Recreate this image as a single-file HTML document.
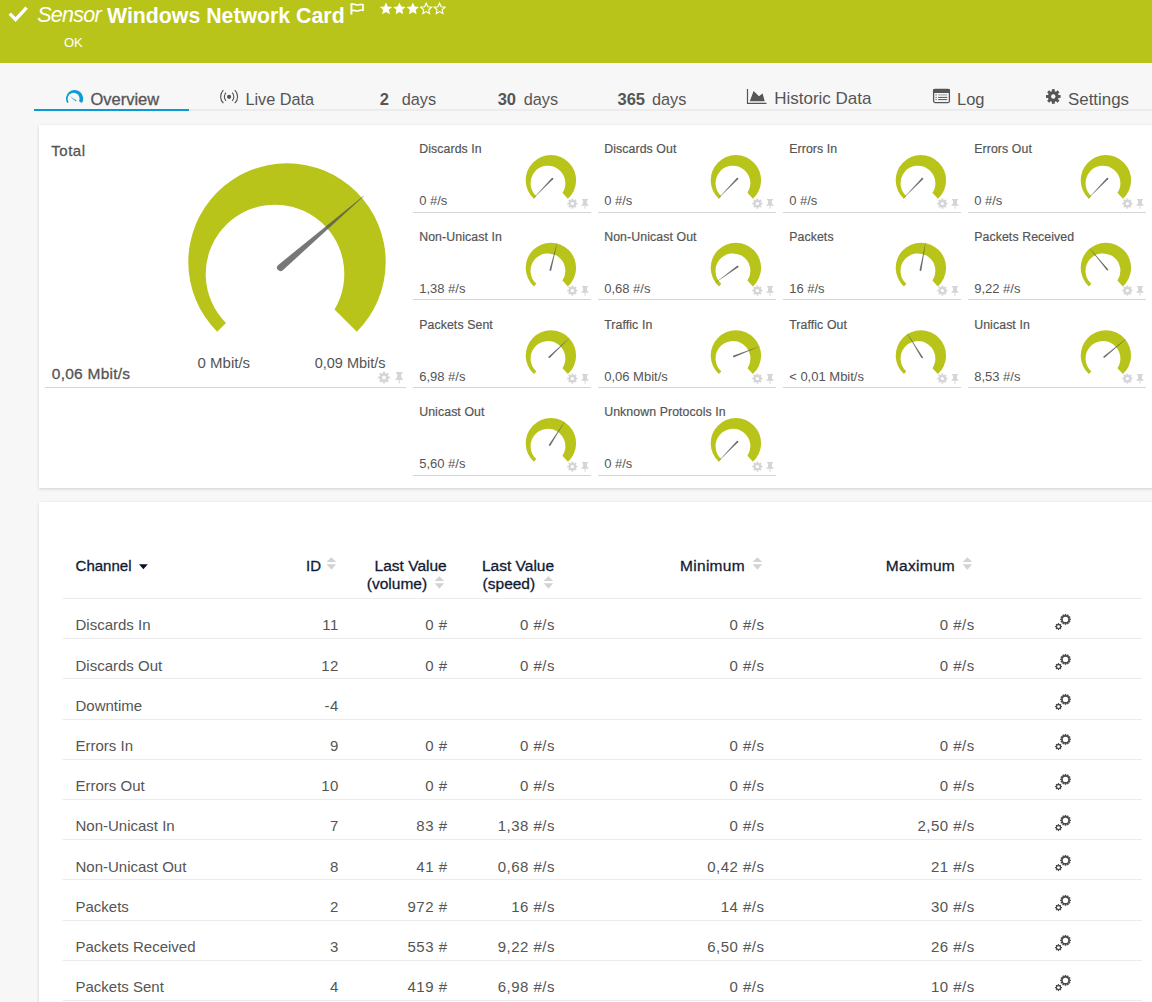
<!DOCTYPE html><html><head><meta charset="utf-8"><style>
html,body{margin:0;padding:0;}
body{width:1152px;height:1002px;overflow:hidden;background:#f7f7f7;position:relative;font-family:"Liberation Sans", sans-serif;}
.t{position:absolute;white-space:nowrap;line-height:normal;}
.a{position:absolute;overflow:visible;}
.b{position:absolute;}
</style></head><body>
<div class="b" style="left:0;top:0;width:1152px;height:63px;background:#b8c41a"></div>
<svg class="a" style="left:6px;top:4px" width="24" height="20" viewBox="0 0 24 20"><path d="M3.8,9.6 L9.6,15.6 L20.6,3.6" fill="none" stroke="#fff" stroke-width="3.4"/></svg>
<div class="t" style="left:37.20px;top:3.44px;font-size:21.5px;font-weight:normal;color:#fff;font-style:italic;letter-spacing:-0.75px;">Sensor</div>
<div class="t" style="left:107.00px;top:3.62px;font-size:21.3px;font-weight:bold;color:#fff;font-style:normal;">Windows Network Card</div>
<svg class="a" style="left:350px;top:3px" width="15" height="12" viewBox="0 0 15 12"><path d="M1.4,0.3 V11.6" stroke="#fff" stroke-width="2" fill="none"/><path d="M1.6,1.3 C4,0 6,2.9 9,1.8 C10.5,1.2 11.8,1.2 13,1.7 V7.3 C11.5,6.7 10.2,6.9 8.6,7.7 C6,8.9 4,6.3 1.6,7.7" fill="none" stroke="#fff" stroke-width="1.7"/></svg>
<svg class="a" style="left:380px;top:1px" width="72" height="16" viewBox="0 0 72 16"><polygon points="6.00,1.40 7.80,5.43 12.18,5.89 8.91,8.84 9.82,13.16 6.00,10.96 2.18,13.16 3.09,8.84 -0.18,5.89 4.20,5.43" fill="#fff"/><polygon points="19.40,1.40 21.20,5.43 25.58,5.89 22.31,8.84 23.22,13.16 19.40,10.96 15.58,13.16 16.49,8.84 13.22,5.89 17.60,5.43" fill="#fff"/><polygon points="32.80,1.40 34.60,5.43 38.98,5.89 35.71,8.84 36.62,13.16 32.80,10.96 28.98,13.16 29.89,8.84 26.62,5.89 31.00,5.43" fill="#fff"/><polygon points="46.20,2.15 47.79,5.71 51.67,6.12 48.77,8.74 49.58,12.55 46.20,10.60 42.82,12.55 43.63,8.74 40.73,6.12 44.61,5.71" fill="none" stroke="#fff" stroke-width="1.1" stroke-linejoin="miter"/><polygon points="59.60,2.15 61.19,5.71 65.07,6.12 62.17,8.74 62.98,12.55 59.60,10.60 56.22,12.55 57.03,8.74 54.13,6.12 58.01,5.71" fill="none" stroke="#fff" stroke-width="1.1" stroke-linejoin="miter"/></svg>
<div class="t" style="left:64.00px;top:35.13px;font-size:13px;font-weight:normal;color:#fff;font-style:normal;">OK</div>
<div class="b" style="left:34px;top:109px;width:1118px;height:2px;background:#ececec"></div>
<div class="b" style="left:34px;top:109px;width:155px;height:2px;background:#0a9ad6"></div>
<svg class="a" style="left:0;top:0" width="1152" height="200"><defs><mask id="ovm"><rect x="0" y="0" width="200" height="200" fill="#fff"/><circle cx="73.6" cy="98.85" r="6.0" fill="#000"/></mask></defs><path d="M74.58,98.58 L67.25,103.07 A8.6,8.6 0 1 1 81.91,103.07 Z" fill="#0a9bd8" mask="url(#ovm)"/><path d="M69.4,96 L76.6,100.4 L75.7,101.2 Z" fill="#0a9bd8"/></svg>
<div class="t" style="left:90.40px;top:89.87px;font-size:16.5px;font-weight:normal;color:#555;font-style:normal;-webkit-text-stroke:0.3px currentColor;">Overview</div>
<svg class="a" style="left:219px;top:88px" width="20" height="17" viewBox="0 0 20 17"><g fill="none" stroke="#555" stroke-width="1.15"><path d="M4.4,2.2 A9,9 0 0 0 4.4,15.2"/><path d="M15.8,2.2 A9,9 0 0 1 15.8,15.2"/><path d="M7,4.6 A6,6 0 0 0 7,12.8"/><path d="M13.2,4.6 A6,6 0 0 1 13.2,12.8"/></g><circle cx="10.1" cy="8.8" r="2.1" fill="#555"/></svg>
<div class="t" style="left:245.40px;top:90.05px;font-size:16.3px;font-weight:normal;color:#555;font-style:normal;">Live Data</div>
<div class="t" style="left:379.80px;top:89.87px;font-size:16.5px;font-weight:bold;color:#555;font-style:normal;">2</div>
<div class="t" style="left:401.70px;top:90.05px;font-size:16.3px;font-weight:normal;color:#555;font-style:normal;">days</div>
<div class="t" style="left:497.70px;top:89.87px;font-size:16.5px;font-weight:bold;color:#555;font-style:normal;">30</div>
<div class="t" style="left:523.75px;top:90.05px;font-size:16.3px;font-weight:normal;color:#555;font-style:normal;">days</div>
<div class="t" style="left:617.50px;top:89.87px;font-size:16.5px;font-weight:bold;color:#555;font-style:normal;">365</div>
<div class="t" style="left:651.90px;top:90.05px;font-size:16.3px;font-weight:normal;color:#555;font-style:normal;">days</div>
<svg class="a" style="left:746px;top:88px" width="22" height="17" viewBox="0 0 22 17"><path d="M1.5,1 V15.4 H20.5" fill="none" stroke="#555" stroke-width="1.2"/><path d="M3.8,13.2 L7.6,3 L13,8.2 L16.6,5.4 L18.7,13.2 Z" fill="#555"/></svg>
<div class="t" style="left:774.20px;top:89.41px;font-size:17px;font-weight:normal;color:#555;font-style:normal;">Historic Data</div>
<svg class="a" style="left:932px;top:88px" width="19" height="16" viewBox="0 0 19 16"><rect x="1.6" y="1.4" width="15.8" height="13.2" rx="1.5" fill="none" stroke="#555" stroke-width="1.3"/><rect x="1.2" y="1" width="16.6" height="4" fill="#555"/><g fill="#555"><rect x="3.5" y="6.4" width="1.2" height="1"/><rect x="6.2" y="6.4" width="9" height="1" fill="#999"/><rect x="3.5" y="8.9" width="1.2" height="1"/><rect x="6.2" y="8.9" width="9" height="1"/><rect x="3.5" y="11.1" width="1.2" height="1"/><rect x="6.2" y="11.1" width="9" height="1"/></g></svg>
<div class="t" style="left:957.00px;top:89.87px;font-size:16.5px;font-weight:normal;color:#555;font-style:normal;">Log</div>
<svg class="a" style="left:1045px;top:88px" width="17" height="17" viewBox="0 0 17 17"><g fill="#555"><circle cx="8.30" cy="8.50" r="5.40"/><rect x="6.84" y="1.20" width="2.92" height="3.65" transform="rotate(0.0 8.30 8.50)"/><rect x="6.84" y="1.20" width="2.92" height="3.65" transform="rotate(45.0 8.30 8.50)"/><rect x="6.84" y="1.20" width="2.92" height="3.65" transform="rotate(90.0 8.30 8.50)"/><rect x="6.84" y="1.20" width="2.92" height="3.65" transform="rotate(135.0 8.30 8.50)"/><rect x="6.84" y="1.20" width="2.92" height="3.65" transform="rotate(180.0 8.30 8.50)"/><rect x="6.84" y="1.20" width="2.92" height="3.65" transform="rotate(225.0 8.30 8.50)"/><rect x="6.84" y="1.20" width="2.92" height="3.65" transform="rotate(270.0 8.30 8.50)"/><rect x="6.84" y="1.20" width="2.92" height="3.65" transform="rotate(315.0 8.30 8.50)"/></g><circle cx="8.30" cy="8.50" r="2.19" fill="#f7f7f7"/></svg>
<div class="t" style="left:1068.00px;top:89.51px;font-size:16.9px;font-weight:normal;color:#555;font-style:normal;">Settings</div>
<div class="b" style="left:39px;top:125px;width:1200px;height:363px;background:#fff;box-shadow:0 1px 3px rgba(0,0,0,0.16)"></div>
<div class="t" style="left:51.30px;top:142.43px;font-size:15px;font-weight:normal;color:#555;font-style:normal;-webkit-text-stroke:0.3px currentColor;letter-spacing:0.5px;">Total</div>
<svg class="a" style="left:0;top:0" width="1152" height="1002"><path d="M217.21,331.79 A98.70,98.70 0 1 1 356.79,331.79 L334.51,309.51 A69.30,69.30 0 1 0 226.00,323.00 Z" fill="#b8c41a"/><path d="M282.84,270.20 L363.77,196.37 L363.38,195.91 L278.27,264.89 A3.50,3.50 0 0 0 282.84,270.20 Z" fill="rgba(85,85,85,0.8)"/></svg>
<div class="t" style="left:51.80px;top:364.67px;font-size:15.5px;font-weight:normal;color:#555;font-style:normal;-webkit-text-stroke:0.3px currentColor;letter-spacing:0.25px;">0,06 Mbit/s</div>
<div class="t" style="left:197.60px;top:354.43px;font-size:15px;font-weight:normal;color:#555;font-style:normal;">0 Mbit/s</div>
<div class="t" style="left:-214.40px;width:600px;text-align:right;top:354.88px;font-size:14.5px;font-weight:normal;color:#555;font-style:normal;">0,09 Mbit/s</div>
<div class="b" style="left:45px;top:387px;width:361px;height:1px;background:#d5d5d9"></div>
<svg class="a" style="left:377px;top:370px" width="14" height="14" viewBox="0 0 14 14"><g fill="#d5d5d9"><circle cx="7.00" cy="7.60" r="4.29"/><rect x="5.84" y="1.80" width="2.32" height="2.90" transform="rotate(0.0 7.00 7.60)"/><rect x="5.84" y="1.80" width="2.32" height="2.90" transform="rotate(45.0 7.00 7.60)"/><rect x="5.84" y="1.80" width="2.32" height="2.90" transform="rotate(90.0 7.00 7.60)"/><rect x="5.84" y="1.80" width="2.32" height="2.90" transform="rotate(135.0 7.00 7.60)"/><rect x="5.84" y="1.80" width="2.32" height="2.90" transform="rotate(180.0 7.00 7.60)"/><rect x="5.84" y="1.80" width="2.32" height="2.90" transform="rotate(225.0 7.00 7.60)"/><rect x="5.84" y="1.80" width="2.32" height="2.90" transform="rotate(270.0 7.00 7.60)"/><rect x="5.84" y="1.80" width="2.32" height="2.90" transform="rotate(315.0 7.00 7.60)"/></g><circle cx="7.00" cy="7.60" r="1.91" fill="#fff"/></svg>
<svg class="a" style="left:395px;top:372px" width="12" height="13" viewBox="0 0 12 13"><g transform="scale(0.85 1.06)"><path d="M1.3,0 H8.7 V1.5 H7.4 V5 L9.6,7 V7.6 H0.4 V7 L2.6,5 V1.5 H1.3 Z" fill="#d5d5d9"/><rect x="4.4" y="7.4" width="1.2" height="3.4" fill="#d5d5d9"/></g></svg>
<div class="t" style="left:419.20px;top:142.47px;font-size:12.3px;font-weight:normal;color:#555;font-style:normal;-webkit-text-stroke:0.2px currentColor;letter-spacing:0.1px;">Discards In</div>
<div class="t" style="left:419.20px;top:193.33px;font-size:13px;font-weight:normal;color:#555;font-style:normal;">0 #/s</div>
<div class="b" style="left:413px;top:212px;width:178px;height:1px;background:#d5d5d9"></div>
<svg class="a" style="left:565px;top:196px" width="14" height="14" viewBox="0 0 14 14"><g fill="#d5d5d9"><circle cx="7.40" cy="7.60" r="3.70"/><rect x="6.40" y="2.60" width="2.00" height="2.50" transform="rotate(0.0 7.40 7.60)"/><rect x="6.40" y="2.60" width="2.00" height="2.50" transform="rotate(45.0 7.40 7.60)"/><rect x="6.40" y="2.60" width="2.00" height="2.50" transform="rotate(90.0 7.40 7.60)"/><rect x="6.40" y="2.60" width="2.00" height="2.50" transform="rotate(135.0 7.40 7.60)"/><rect x="6.40" y="2.60" width="2.00" height="2.50" transform="rotate(180.0 7.40 7.60)"/><rect x="6.40" y="2.60" width="2.00" height="2.50" transform="rotate(225.0 7.40 7.60)"/><rect x="6.40" y="2.60" width="2.00" height="2.50" transform="rotate(270.0 7.40 7.60)"/><rect x="6.40" y="2.60" width="2.00" height="2.50" transform="rotate(315.0 7.40 7.60)"/></g><circle cx="7.40" cy="7.60" r="1.65" fill="#fff"/></svg>
<svg class="a" style="left:581px;top:199px" width="12" height="13" viewBox="0 0 12 13"><g transform="scale(0.8 0.9)"><path d="M1.3,0 H8.7 V1.5 H7.4 V5 L9.6,7 V7.6 H0.4 V7 L2.6,5 V1.5 H1.3 Z" fill="#d5d5d9"/><rect x="4.4" y="7.4" width="1.2" height="3.4" fill="#d5d5d9"/></g></svg>
<div class="t" style="left:604.20px;top:142.47px;font-size:12.3px;font-weight:normal;color:#555;font-style:normal;-webkit-text-stroke:0.2px currentColor;letter-spacing:0.1px;">Discards Out</div>
<div class="t" style="left:604.20px;top:193.33px;font-size:13px;font-weight:normal;color:#555;font-style:normal;">0 #/s</div>
<div class="b" style="left:598px;top:212px;width:178px;height:1px;background:#d5d5d9"></div>
<svg class="a" style="left:750px;top:196px" width="14" height="14" viewBox="0 0 14 14"><g fill="#d5d5d9"><circle cx="7.40" cy="7.60" r="3.70"/><rect x="6.40" y="2.60" width="2.00" height="2.50" transform="rotate(0.0 7.40 7.60)"/><rect x="6.40" y="2.60" width="2.00" height="2.50" transform="rotate(45.0 7.40 7.60)"/><rect x="6.40" y="2.60" width="2.00" height="2.50" transform="rotate(90.0 7.40 7.60)"/><rect x="6.40" y="2.60" width="2.00" height="2.50" transform="rotate(135.0 7.40 7.60)"/><rect x="6.40" y="2.60" width="2.00" height="2.50" transform="rotate(180.0 7.40 7.60)"/><rect x="6.40" y="2.60" width="2.00" height="2.50" transform="rotate(225.0 7.40 7.60)"/><rect x="6.40" y="2.60" width="2.00" height="2.50" transform="rotate(270.0 7.40 7.60)"/><rect x="6.40" y="2.60" width="2.00" height="2.50" transform="rotate(315.0 7.40 7.60)"/></g><circle cx="7.40" cy="7.60" r="1.65" fill="#fff"/></svg>
<svg class="a" style="left:766px;top:199px" width="12" height="13" viewBox="0 0 12 13"><g transform="scale(0.8 0.9)"><path d="M1.3,0 H8.7 V1.5 H7.4 V5 L9.6,7 V7.6 H0.4 V7 L2.6,5 V1.5 H1.3 Z" fill="#d5d5d9"/><rect x="4.4" y="7.4" width="1.2" height="3.4" fill="#d5d5d9"/></g></svg>
<div class="t" style="left:789.20px;top:142.47px;font-size:12.3px;font-weight:normal;color:#555;font-style:normal;-webkit-text-stroke:0.2px currentColor;letter-spacing:0.1px;">Errors In</div>
<div class="t" style="left:789.20px;top:193.33px;font-size:13px;font-weight:normal;color:#555;font-style:normal;">0 #/s</div>
<div class="b" style="left:783px;top:212px;width:178px;height:1px;background:#d5d5d9"></div>
<svg class="a" style="left:935px;top:196px" width="14" height="14" viewBox="0 0 14 14"><g fill="#d5d5d9"><circle cx="7.40" cy="7.60" r="3.70"/><rect x="6.40" y="2.60" width="2.00" height="2.50" transform="rotate(0.0 7.40 7.60)"/><rect x="6.40" y="2.60" width="2.00" height="2.50" transform="rotate(45.0 7.40 7.60)"/><rect x="6.40" y="2.60" width="2.00" height="2.50" transform="rotate(90.0 7.40 7.60)"/><rect x="6.40" y="2.60" width="2.00" height="2.50" transform="rotate(135.0 7.40 7.60)"/><rect x="6.40" y="2.60" width="2.00" height="2.50" transform="rotate(180.0 7.40 7.60)"/><rect x="6.40" y="2.60" width="2.00" height="2.50" transform="rotate(225.0 7.40 7.60)"/><rect x="6.40" y="2.60" width="2.00" height="2.50" transform="rotate(270.0 7.40 7.60)"/><rect x="6.40" y="2.60" width="2.00" height="2.50" transform="rotate(315.0 7.40 7.60)"/></g><circle cx="7.40" cy="7.60" r="1.65" fill="#fff"/></svg>
<svg class="a" style="left:951px;top:199px" width="12" height="13" viewBox="0 0 12 13"><g transform="scale(0.8 0.9)"><path d="M1.3,0 H8.7 V1.5 H7.4 V5 L9.6,7 V7.6 H0.4 V7 L2.6,5 V1.5 H1.3 Z" fill="#d5d5d9"/><rect x="4.4" y="7.4" width="1.2" height="3.4" fill="#d5d5d9"/></g></svg>
<div class="t" style="left:974.20px;top:142.47px;font-size:12.3px;font-weight:normal;color:#555;font-style:normal;-webkit-text-stroke:0.2px currentColor;letter-spacing:0.1px;">Errors Out</div>
<div class="t" style="left:974.20px;top:193.33px;font-size:13px;font-weight:normal;color:#555;font-style:normal;">0 #/s</div>
<div class="b" style="left:968px;top:212px;width:178px;height:1px;background:#d5d5d9"></div>
<svg class="a" style="left:1120px;top:196px" width="14" height="14" viewBox="0 0 14 14"><g fill="#d5d5d9"><circle cx="7.40" cy="7.60" r="3.70"/><rect x="6.40" y="2.60" width="2.00" height="2.50" transform="rotate(0.0 7.40 7.60)"/><rect x="6.40" y="2.60" width="2.00" height="2.50" transform="rotate(45.0 7.40 7.60)"/><rect x="6.40" y="2.60" width="2.00" height="2.50" transform="rotate(90.0 7.40 7.60)"/><rect x="6.40" y="2.60" width="2.00" height="2.50" transform="rotate(135.0 7.40 7.60)"/><rect x="6.40" y="2.60" width="2.00" height="2.50" transform="rotate(180.0 7.40 7.60)"/><rect x="6.40" y="2.60" width="2.00" height="2.50" transform="rotate(225.0 7.40 7.60)"/><rect x="6.40" y="2.60" width="2.00" height="2.50" transform="rotate(270.0 7.40 7.60)"/><rect x="6.40" y="2.60" width="2.00" height="2.50" transform="rotate(315.0 7.40 7.60)"/></g><circle cx="7.40" cy="7.60" r="1.65" fill="#fff"/></svg>
<svg class="a" style="left:1136px;top:199px" width="12" height="13" viewBox="0 0 12 13"><g transform="scale(0.8 0.9)"><path d="M1.3,0 H8.7 V1.5 H7.4 V5 L9.6,7 V7.6 H0.4 V7 L2.6,5 V1.5 H1.3 Z" fill="#d5d5d9"/><rect x="4.4" y="7.4" width="1.2" height="3.4" fill="#d5d5d9"/></g></svg>
<div class="t" style="left:419.20px;top:230.14px;font-size:12.3px;font-weight:normal;color:#555;font-style:normal;-webkit-text-stroke:0.2px currentColor;letter-spacing:0.1px;">Non-Unicast In</div>
<div class="t" style="left:419.20px;top:281.00px;font-size:13px;font-weight:normal;color:#555;font-style:normal;">1,38 #/s</div>
<div class="b" style="left:413px;top:299px;width:178px;height:1px;background:#d5d5d9"></div>
<svg class="a" style="left:565px;top:283px" width="14" height="14" viewBox="0 0 14 14"><g fill="#d5d5d9"><circle cx="7.40" cy="7.60" r="3.70"/><rect x="6.40" y="2.60" width="2.00" height="2.50" transform="rotate(0.0 7.40 7.60)"/><rect x="6.40" y="2.60" width="2.00" height="2.50" transform="rotate(45.0 7.40 7.60)"/><rect x="6.40" y="2.60" width="2.00" height="2.50" transform="rotate(90.0 7.40 7.60)"/><rect x="6.40" y="2.60" width="2.00" height="2.50" transform="rotate(135.0 7.40 7.60)"/><rect x="6.40" y="2.60" width="2.00" height="2.50" transform="rotate(180.0 7.40 7.60)"/><rect x="6.40" y="2.60" width="2.00" height="2.50" transform="rotate(225.0 7.40 7.60)"/><rect x="6.40" y="2.60" width="2.00" height="2.50" transform="rotate(270.0 7.40 7.60)"/><rect x="6.40" y="2.60" width="2.00" height="2.50" transform="rotate(315.0 7.40 7.60)"/></g><circle cx="7.40" cy="7.60" r="1.65" fill="#fff"/></svg>
<svg class="a" style="left:581px;top:286px" width="12" height="13" viewBox="0 0 12 13"><g transform="scale(0.8 0.9)"><path d="M1.3,0 H8.7 V1.5 H7.4 V5 L9.6,7 V7.6 H0.4 V7 L2.6,5 V1.5 H1.3 Z" fill="#d5d5d9"/><rect x="4.4" y="7.4" width="1.2" height="3.4" fill="#d5d5d9"/></g></svg>
<div class="t" style="left:604.20px;top:230.14px;font-size:12.3px;font-weight:normal;color:#555;font-style:normal;-webkit-text-stroke:0.2px currentColor;letter-spacing:0.1px;">Non-Unicast Out</div>
<div class="t" style="left:604.20px;top:281.00px;font-size:13px;font-weight:normal;color:#555;font-style:normal;">0,68 #/s</div>
<div class="b" style="left:598px;top:299px;width:178px;height:1px;background:#d5d5d9"></div>
<svg class="a" style="left:750px;top:283px" width="14" height="14" viewBox="0 0 14 14"><g fill="#d5d5d9"><circle cx="7.40" cy="7.60" r="3.70"/><rect x="6.40" y="2.60" width="2.00" height="2.50" transform="rotate(0.0 7.40 7.60)"/><rect x="6.40" y="2.60" width="2.00" height="2.50" transform="rotate(45.0 7.40 7.60)"/><rect x="6.40" y="2.60" width="2.00" height="2.50" transform="rotate(90.0 7.40 7.60)"/><rect x="6.40" y="2.60" width="2.00" height="2.50" transform="rotate(135.0 7.40 7.60)"/><rect x="6.40" y="2.60" width="2.00" height="2.50" transform="rotate(180.0 7.40 7.60)"/><rect x="6.40" y="2.60" width="2.00" height="2.50" transform="rotate(225.0 7.40 7.60)"/><rect x="6.40" y="2.60" width="2.00" height="2.50" transform="rotate(270.0 7.40 7.60)"/><rect x="6.40" y="2.60" width="2.00" height="2.50" transform="rotate(315.0 7.40 7.60)"/></g><circle cx="7.40" cy="7.60" r="1.65" fill="#fff"/></svg>
<svg class="a" style="left:766px;top:286px" width="12" height="13" viewBox="0 0 12 13"><g transform="scale(0.8 0.9)"><path d="M1.3,0 H8.7 V1.5 H7.4 V5 L9.6,7 V7.6 H0.4 V7 L2.6,5 V1.5 H1.3 Z" fill="#d5d5d9"/><rect x="4.4" y="7.4" width="1.2" height="3.4" fill="#d5d5d9"/></g></svg>
<div class="t" style="left:789.20px;top:230.14px;font-size:12.3px;font-weight:normal;color:#555;font-style:normal;-webkit-text-stroke:0.2px currentColor;letter-spacing:0.1px;">Packets</div>
<div class="t" style="left:789.20px;top:281.00px;font-size:13px;font-weight:normal;color:#555;font-style:normal;">16 #/s</div>
<div class="b" style="left:783px;top:299px;width:178px;height:1px;background:#d5d5d9"></div>
<svg class="a" style="left:935px;top:283px" width="14" height="14" viewBox="0 0 14 14"><g fill="#d5d5d9"><circle cx="7.40" cy="7.60" r="3.70"/><rect x="6.40" y="2.60" width="2.00" height="2.50" transform="rotate(0.0 7.40 7.60)"/><rect x="6.40" y="2.60" width="2.00" height="2.50" transform="rotate(45.0 7.40 7.60)"/><rect x="6.40" y="2.60" width="2.00" height="2.50" transform="rotate(90.0 7.40 7.60)"/><rect x="6.40" y="2.60" width="2.00" height="2.50" transform="rotate(135.0 7.40 7.60)"/><rect x="6.40" y="2.60" width="2.00" height="2.50" transform="rotate(180.0 7.40 7.60)"/><rect x="6.40" y="2.60" width="2.00" height="2.50" transform="rotate(225.0 7.40 7.60)"/><rect x="6.40" y="2.60" width="2.00" height="2.50" transform="rotate(270.0 7.40 7.60)"/><rect x="6.40" y="2.60" width="2.00" height="2.50" transform="rotate(315.0 7.40 7.60)"/></g><circle cx="7.40" cy="7.60" r="1.65" fill="#fff"/></svg>
<svg class="a" style="left:951px;top:286px" width="12" height="13" viewBox="0 0 12 13"><g transform="scale(0.8 0.9)"><path d="M1.3,0 H8.7 V1.5 H7.4 V5 L9.6,7 V7.6 H0.4 V7 L2.6,5 V1.5 H1.3 Z" fill="#d5d5d9"/><rect x="4.4" y="7.4" width="1.2" height="3.4" fill="#d5d5d9"/></g></svg>
<div class="t" style="left:974.20px;top:230.14px;font-size:12.3px;font-weight:normal;color:#555;font-style:normal;-webkit-text-stroke:0.2px currentColor;letter-spacing:0.1px;">Packets Received</div>
<div class="t" style="left:974.20px;top:281.00px;font-size:13px;font-weight:normal;color:#555;font-style:normal;">9,22 #/s</div>
<div class="b" style="left:968px;top:299px;width:178px;height:1px;background:#d5d5d9"></div>
<svg class="a" style="left:1120px;top:283px" width="14" height="14" viewBox="0 0 14 14"><g fill="#d5d5d9"><circle cx="7.40" cy="7.60" r="3.70"/><rect x="6.40" y="2.60" width="2.00" height="2.50" transform="rotate(0.0 7.40 7.60)"/><rect x="6.40" y="2.60" width="2.00" height="2.50" transform="rotate(45.0 7.40 7.60)"/><rect x="6.40" y="2.60" width="2.00" height="2.50" transform="rotate(90.0 7.40 7.60)"/><rect x="6.40" y="2.60" width="2.00" height="2.50" transform="rotate(135.0 7.40 7.60)"/><rect x="6.40" y="2.60" width="2.00" height="2.50" transform="rotate(180.0 7.40 7.60)"/><rect x="6.40" y="2.60" width="2.00" height="2.50" transform="rotate(225.0 7.40 7.60)"/><rect x="6.40" y="2.60" width="2.00" height="2.50" transform="rotate(270.0 7.40 7.60)"/><rect x="6.40" y="2.60" width="2.00" height="2.50" transform="rotate(315.0 7.40 7.60)"/></g><circle cx="7.40" cy="7.60" r="1.65" fill="#fff"/></svg>
<svg class="a" style="left:1136px;top:286px" width="12" height="13" viewBox="0 0 12 13"><g transform="scale(0.8 0.9)"><path d="M1.3,0 H8.7 V1.5 H7.4 V5 L9.6,7 V7.6 H0.4 V7 L2.6,5 V1.5 H1.3 Z" fill="#d5d5d9"/><rect x="4.4" y="7.4" width="1.2" height="3.4" fill="#d5d5d9"/></g></svg>
<div class="t" style="left:419.20px;top:317.81px;font-size:12.3px;font-weight:normal;color:#555;font-style:normal;-webkit-text-stroke:0.2px currentColor;letter-spacing:0.1px;">Packets Sent</div>
<div class="t" style="left:419.20px;top:368.68px;font-size:13px;font-weight:normal;color:#555;font-style:normal;">6,98 #/s</div>
<div class="b" style="left:413px;top:387px;width:178px;height:1px;background:#d5d5d9"></div>
<svg class="a" style="left:565px;top:371px" width="14" height="14" viewBox="0 0 14 14"><g fill="#d5d5d9"><circle cx="7.40" cy="7.60" r="3.70"/><rect x="6.40" y="2.60" width="2.00" height="2.50" transform="rotate(0.0 7.40 7.60)"/><rect x="6.40" y="2.60" width="2.00" height="2.50" transform="rotate(45.0 7.40 7.60)"/><rect x="6.40" y="2.60" width="2.00" height="2.50" transform="rotate(90.0 7.40 7.60)"/><rect x="6.40" y="2.60" width="2.00" height="2.50" transform="rotate(135.0 7.40 7.60)"/><rect x="6.40" y="2.60" width="2.00" height="2.50" transform="rotate(180.0 7.40 7.60)"/><rect x="6.40" y="2.60" width="2.00" height="2.50" transform="rotate(225.0 7.40 7.60)"/><rect x="6.40" y="2.60" width="2.00" height="2.50" transform="rotate(270.0 7.40 7.60)"/><rect x="6.40" y="2.60" width="2.00" height="2.50" transform="rotate(315.0 7.40 7.60)"/></g><circle cx="7.40" cy="7.60" r="1.65" fill="#fff"/></svg>
<svg class="a" style="left:581px;top:374px" width="12" height="13" viewBox="0 0 12 13"><g transform="scale(0.8 0.9)"><path d="M1.3,0 H8.7 V1.5 H7.4 V5 L9.6,7 V7.6 H0.4 V7 L2.6,5 V1.5 H1.3 Z" fill="#d5d5d9"/><rect x="4.4" y="7.4" width="1.2" height="3.4" fill="#d5d5d9"/></g></svg>
<div class="t" style="left:604.20px;top:317.81px;font-size:12.3px;font-weight:normal;color:#555;font-style:normal;-webkit-text-stroke:0.2px currentColor;letter-spacing:0.1px;">Traffic In</div>
<div class="t" style="left:604.20px;top:368.68px;font-size:13px;font-weight:normal;color:#555;font-style:normal;">0,06 Mbit/s</div>
<div class="b" style="left:598px;top:387px;width:178px;height:1px;background:#d5d5d9"></div>
<svg class="a" style="left:750px;top:371px" width="14" height="14" viewBox="0 0 14 14"><g fill="#d5d5d9"><circle cx="7.40" cy="7.60" r="3.70"/><rect x="6.40" y="2.60" width="2.00" height="2.50" transform="rotate(0.0 7.40 7.60)"/><rect x="6.40" y="2.60" width="2.00" height="2.50" transform="rotate(45.0 7.40 7.60)"/><rect x="6.40" y="2.60" width="2.00" height="2.50" transform="rotate(90.0 7.40 7.60)"/><rect x="6.40" y="2.60" width="2.00" height="2.50" transform="rotate(135.0 7.40 7.60)"/><rect x="6.40" y="2.60" width="2.00" height="2.50" transform="rotate(180.0 7.40 7.60)"/><rect x="6.40" y="2.60" width="2.00" height="2.50" transform="rotate(225.0 7.40 7.60)"/><rect x="6.40" y="2.60" width="2.00" height="2.50" transform="rotate(270.0 7.40 7.60)"/><rect x="6.40" y="2.60" width="2.00" height="2.50" transform="rotate(315.0 7.40 7.60)"/></g><circle cx="7.40" cy="7.60" r="1.65" fill="#fff"/></svg>
<svg class="a" style="left:766px;top:374px" width="12" height="13" viewBox="0 0 12 13"><g transform="scale(0.8 0.9)"><path d="M1.3,0 H8.7 V1.5 H7.4 V5 L9.6,7 V7.6 H0.4 V7 L2.6,5 V1.5 H1.3 Z" fill="#d5d5d9"/><rect x="4.4" y="7.4" width="1.2" height="3.4" fill="#d5d5d9"/></g></svg>
<div class="t" style="left:789.20px;top:317.81px;font-size:12.3px;font-weight:normal;color:#555;font-style:normal;-webkit-text-stroke:0.2px currentColor;letter-spacing:0.1px;">Traffic Out</div>
<div class="t" style="left:789.20px;top:368.68px;font-size:13px;font-weight:normal;color:#555;font-style:normal;">&lt; 0,01 Mbit/s</div>
<div class="b" style="left:783px;top:387px;width:178px;height:1px;background:#d5d5d9"></div>
<svg class="a" style="left:935px;top:371px" width="14" height="14" viewBox="0 0 14 14"><g fill="#d5d5d9"><circle cx="7.40" cy="7.60" r="3.70"/><rect x="6.40" y="2.60" width="2.00" height="2.50" transform="rotate(0.0 7.40 7.60)"/><rect x="6.40" y="2.60" width="2.00" height="2.50" transform="rotate(45.0 7.40 7.60)"/><rect x="6.40" y="2.60" width="2.00" height="2.50" transform="rotate(90.0 7.40 7.60)"/><rect x="6.40" y="2.60" width="2.00" height="2.50" transform="rotate(135.0 7.40 7.60)"/><rect x="6.40" y="2.60" width="2.00" height="2.50" transform="rotate(180.0 7.40 7.60)"/><rect x="6.40" y="2.60" width="2.00" height="2.50" transform="rotate(225.0 7.40 7.60)"/><rect x="6.40" y="2.60" width="2.00" height="2.50" transform="rotate(270.0 7.40 7.60)"/><rect x="6.40" y="2.60" width="2.00" height="2.50" transform="rotate(315.0 7.40 7.60)"/></g><circle cx="7.40" cy="7.60" r="1.65" fill="#fff"/></svg>
<svg class="a" style="left:951px;top:374px" width="12" height="13" viewBox="0 0 12 13"><g transform="scale(0.8 0.9)"><path d="M1.3,0 H8.7 V1.5 H7.4 V5 L9.6,7 V7.6 H0.4 V7 L2.6,5 V1.5 H1.3 Z" fill="#d5d5d9"/><rect x="4.4" y="7.4" width="1.2" height="3.4" fill="#d5d5d9"/></g></svg>
<div class="t" style="left:974.20px;top:317.81px;font-size:12.3px;font-weight:normal;color:#555;font-style:normal;-webkit-text-stroke:0.2px currentColor;letter-spacing:0.1px;">Unicast In</div>
<div class="t" style="left:974.20px;top:368.68px;font-size:13px;font-weight:normal;color:#555;font-style:normal;">8,53 #/s</div>
<div class="b" style="left:968px;top:387px;width:178px;height:1px;background:#d5d5d9"></div>
<svg class="a" style="left:1120px;top:371px" width="14" height="14" viewBox="0 0 14 14"><g fill="#d5d5d9"><circle cx="7.40" cy="7.60" r="3.70"/><rect x="6.40" y="2.60" width="2.00" height="2.50" transform="rotate(0.0 7.40 7.60)"/><rect x="6.40" y="2.60" width="2.00" height="2.50" transform="rotate(45.0 7.40 7.60)"/><rect x="6.40" y="2.60" width="2.00" height="2.50" transform="rotate(90.0 7.40 7.60)"/><rect x="6.40" y="2.60" width="2.00" height="2.50" transform="rotate(135.0 7.40 7.60)"/><rect x="6.40" y="2.60" width="2.00" height="2.50" transform="rotate(180.0 7.40 7.60)"/><rect x="6.40" y="2.60" width="2.00" height="2.50" transform="rotate(225.0 7.40 7.60)"/><rect x="6.40" y="2.60" width="2.00" height="2.50" transform="rotate(270.0 7.40 7.60)"/><rect x="6.40" y="2.60" width="2.00" height="2.50" transform="rotate(315.0 7.40 7.60)"/></g><circle cx="7.40" cy="7.60" r="1.65" fill="#fff"/></svg>
<svg class="a" style="left:1136px;top:374px" width="12" height="13" viewBox="0 0 12 13"><g transform="scale(0.8 0.9)"><path d="M1.3,0 H8.7 V1.5 H7.4 V5 L9.6,7 V7.6 H0.4 V7 L2.6,5 V1.5 H1.3 Z" fill="#d5d5d9"/><rect x="4.4" y="7.4" width="1.2" height="3.4" fill="#d5d5d9"/></g></svg>
<div class="t" style="left:419.20px;top:405.48px;font-size:12.3px;font-weight:normal;color:#555;font-style:normal;-webkit-text-stroke:0.2px currentColor;letter-spacing:0.1px;">Unicast Out</div>
<div class="t" style="left:419.20px;top:456.35px;font-size:13px;font-weight:normal;color:#555;font-style:normal;">5,60 #/s</div>
<div class="b" style="left:413px;top:475px;width:178px;height:1px;background:#d5d5d9"></div>
<svg class="a" style="left:565px;top:459px" width="14" height="14" viewBox="0 0 14 14"><g fill="#d5d5d9"><circle cx="7.40" cy="7.60" r="3.70"/><rect x="6.40" y="2.60" width="2.00" height="2.50" transform="rotate(0.0 7.40 7.60)"/><rect x="6.40" y="2.60" width="2.00" height="2.50" transform="rotate(45.0 7.40 7.60)"/><rect x="6.40" y="2.60" width="2.00" height="2.50" transform="rotate(90.0 7.40 7.60)"/><rect x="6.40" y="2.60" width="2.00" height="2.50" transform="rotate(135.0 7.40 7.60)"/><rect x="6.40" y="2.60" width="2.00" height="2.50" transform="rotate(180.0 7.40 7.60)"/><rect x="6.40" y="2.60" width="2.00" height="2.50" transform="rotate(225.0 7.40 7.60)"/><rect x="6.40" y="2.60" width="2.00" height="2.50" transform="rotate(270.0 7.40 7.60)"/><rect x="6.40" y="2.60" width="2.00" height="2.50" transform="rotate(315.0 7.40 7.60)"/></g><circle cx="7.40" cy="7.60" r="1.65" fill="#fff"/></svg>
<svg class="a" style="left:581px;top:462px" width="12" height="13" viewBox="0 0 12 13"><g transform="scale(0.8 0.9)"><path d="M1.3,0 H8.7 V1.5 H7.4 V5 L9.6,7 V7.6 H0.4 V7 L2.6,5 V1.5 H1.3 Z" fill="#d5d5d9"/><rect x="4.4" y="7.4" width="1.2" height="3.4" fill="#d5d5d9"/></g></svg>
<div class="t" style="left:604.20px;top:405.48px;font-size:12.3px;font-weight:normal;color:#555;font-style:normal;-webkit-text-stroke:0.2px currentColor;letter-spacing:0.1px;">Unknown Protocols In</div>
<div class="t" style="left:604.20px;top:456.35px;font-size:13px;font-weight:normal;color:#555;font-style:normal;">0 #/s</div>
<div class="b" style="left:598px;top:475px;width:178px;height:1px;background:#d5d5d9"></div>
<svg class="a" style="left:750px;top:459px" width="14" height="14" viewBox="0 0 14 14"><g fill="#d5d5d9"><circle cx="7.40" cy="7.60" r="3.70"/><rect x="6.40" y="2.60" width="2.00" height="2.50" transform="rotate(0.0 7.40 7.60)"/><rect x="6.40" y="2.60" width="2.00" height="2.50" transform="rotate(45.0 7.40 7.60)"/><rect x="6.40" y="2.60" width="2.00" height="2.50" transform="rotate(90.0 7.40 7.60)"/><rect x="6.40" y="2.60" width="2.00" height="2.50" transform="rotate(135.0 7.40 7.60)"/><rect x="6.40" y="2.60" width="2.00" height="2.50" transform="rotate(180.0 7.40 7.60)"/><rect x="6.40" y="2.60" width="2.00" height="2.50" transform="rotate(225.0 7.40 7.60)"/><rect x="6.40" y="2.60" width="2.00" height="2.50" transform="rotate(270.0 7.40 7.60)"/><rect x="6.40" y="2.60" width="2.00" height="2.50" transform="rotate(315.0 7.40 7.60)"/></g><circle cx="7.40" cy="7.60" r="1.65" fill="#fff"/></svg>
<svg class="a" style="left:766px;top:462px" width="12" height="13" viewBox="0 0 12 13"><g transform="scale(0.8 0.9)"><path d="M1.3,0 H8.7 V1.5 H7.4 V5 L9.6,7 V7.6 H0.4 V7 L2.6,5 V1.5 H1.3 Z" fill="#d5d5d9"/><rect x="4.4" y="7.4" width="1.2" height="3.4" fill="#d5d5d9"/></g></svg>
<svg class="a" style="left:0;top:0" width="1152" height="1002"><path d="M533.88,198.78 A25.20,25.20 0 1 1 567.92,198.78 L562.45,192.80 A17.41,17.41 0 1 0 536.33,196.10 Z" fill="#b8c41a"/><path d="M551.76,178.02 L532.93,198.70 L533.04,198.80 L553.05,179.26 A0.89,0.89 0 0 0 551.76,178.02 Z" fill="rgba(85,85,85,0.85)"/><path d="M718.88,198.78 A25.20,25.20 0 1 1 752.92,198.78 L747.45,192.80 A17.41,17.41 0 1 0 721.33,196.10 Z" fill="#b8c41a"/><path d="M736.76,178.02 L717.93,198.70 L718.04,198.80 L738.05,179.26 A0.89,0.89 0 0 0 736.76,178.02 Z" fill="rgba(85,85,85,0.85)"/><path d="M903.88,198.78 A25.20,25.20 0 1 1 937.92,198.78 L932.45,192.80 A17.41,17.41 0 1 0 906.33,196.10 Z" fill="#b8c41a"/><path d="M921.76,178.02 L902.93,198.70 L903.04,198.80 L923.05,179.26 A0.89,0.89 0 0 0 921.76,178.02 Z" fill="rgba(85,85,85,0.85)"/><path d="M1088.88,198.78 A25.20,25.20 0 1 1 1122.92,198.78 L1117.45,192.80 A17.41,17.41 0 1 0 1091.33,196.10 Z" fill="#b8c41a"/><path d="M1106.76,178.02 L1087.93,198.70 L1088.04,198.80 L1108.05,179.26 A0.89,0.89 0 0 0 1106.76,178.02 Z" fill="rgba(85,85,85,0.85)"/><path d="M533.88,286.45 A25.20,25.20 0 1 1 567.92,286.45 L562.45,280.47 A17.41,17.41 0 1 0 536.33,283.77 Z" fill="#b8c41a"/><path d="M551.24,270.19 L557.21,242.87 L557.06,242.83 L549.51,269.76 A0.89,0.89 0 0 0 551.24,270.19 Z" fill="rgba(85,85,85,0.85)"/><path d="M718.88,286.45 A25.20,25.20 0 1 1 752.92,286.45 L747.45,280.47 A17.41,17.41 0 1 0 721.33,283.77 Z" fill="#b8c41a"/><path d="M737.13,265.87 L714.99,282.97 L715.08,283.09 L738.18,267.32 A0.89,0.89 0 0 0 737.13,265.87 Z" fill="rgba(85,85,85,0.85)"/><path d="M903.88,286.45 A25.20,25.20 0 1 1 937.92,286.45 L932.45,280.47 A17.41,17.41 0 1 0 906.33,283.77 Z" fill="#b8c41a"/><path d="M921.38,270.17 L925.72,242.54 L925.57,242.51 L919.62,269.84 A0.89,0.89 0 0 0 921.38,270.17 Z" fill="rgba(85,85,85,0.85)"/><path d="M1088.88,286.45 A25.20,25.20 0 1 1 1122.92,286.45 L1117.45,280.47 A17.41,17.41 0 1 0 1091.33,283.77 Z" fill="#b8c41a"/><path d="M1107.97,268.97 L1089.49,247.98 L1089.37,248.08 L1106.60,270.11 A0.89,0.89 0 0 0 1107.97,268.97 Z" fill="rgba(85,85,85,0.85)"/><path d="M533.88,374.12 A25.20,25.20 0 1 1 567.92,374.12 L562.45,368.14 A17.41,17.41 0 1 0 536.33,371.44 Z" fill="#b8c41a"/><path d="M549.94,357.68 L569.66,337.84 L569.55,337.73 L548.71,356.39 A0.89,0.89 0 0 0 549.94,357.68 Z" fill="rgba(85,85,85,0.85)"/><path d="M718.88,374.12 A25.20,25.20 0 1 1 752.92,374.12 L747.45,368.14 A17.41,17.41 0 1 0 721.33,371.44 Z" fill="#b8c41a"/><path d="M734.20,357.16 L759.97,346.29 L759.91,346.14 L733.55,355.49 A0.89,0.89 0 0 0 734.20,357.16 Z" fill="rgba(85,85,85,0.85)"/><path d="M903.88,374.12 A25.20,25.20 0 1 1 937.92,374.12 L932.45,368.14 A17.41,17.41 0 1 0 906.33,371.44 Z" fill="#b8c41a"/><path d="M922.80,356.92 L907.41,333.56 L907.28,333.64 L921.28,357.86 A0.89,0.89 0 0 0 922.80,356.92 Z" fill="rgba(85,85,85,0.85)"/><path d="M1088.88,374.12 A25.20,25.20 0 1 1 1122.92,374.12 L1117.45,368.14 A17.41,17.41 0 1 0 1091.33,371.44 Z" fill="#b8c41a"/><path d="M1104.79,357.61 L1125.85,339.20 L1125.75,339.08 L1103.66,356.23 A0.89,0.89 0 0 0 1104.79,357.61 Z" fill="rgba(85,85,85,0.85)"/><path d="M533.88,461.79 A25.20,25.20 0 1 1 567.92,461.79 L562.45,455.81 A17.41,17.41 0 1 0 536.33,459.11 Z" fill="#b8c41a"/><path d="M550.49,445.52 L564.78,421.48 L564.65,421.40 L548.98,444.56 A0.89,0.89 0 0 0 550.49,445.52 Z" fill="rgba(85,85,85,0.85)"/><path d="M718.88,461.79 A25.20,25.20 0 1 1 752.92,461.79 L747.45,455.81 A17.41,17.41 0 1 0 721.33,459.11 Z" fill="#b8c41a"/><path d="M736.76,441.03 L717.93,461.71 L718.04,461.81 L738.05,442.27 A0.89,0.89 0 0 0 736.76,441.03 Z" fill="rgba(85,85,85,0.85)"/></svg>
<div class="b" style="left:39px;top:502px;width:1200px;height:600px;background:#fff;box-shadow:0 1px 3px rgba(0,0,0,0.16)"></div>
<div class="t" style="left:75.60px;top:557.22px;font-size:15px;font-weight:normal;color:#111a33;font-style:normal;-webkit-text-stroke:0.3px currentColor;">Channel</div>
<svg class="a" style="left:138px;top:563px" width="11" height="7" viewBox="0 0 11 7"><path d="M1,1.2 H9.8 L5.4,6.2 Z" fill="#0a0f2e"/></svg>
<div class="t" style="left:306.00px;top:557.22px;font-size:15px;font-weight:normal;color:#111a33;font-style:normal;-webkit-text-stroke:0.3px currentColor;">ID</div>
<svg class="a" style="left:326px;top:556.5px" width="11" height="14" viewBox="0 0 11 14"><path d="M0.6,5 L5.4,0.3 L10.2,5 Z M0.6,7.3 H10.2 L5.4,12.8 Z" fill="#d3d3d3"/></svg>
<div class="t" style="left:-153.30px;width:600px;text-align:right;top:556.57px;font-size:15.5px;font-weight:normal;color:#111a33;font-style:normal;-webkit-text-stroke:0.3px currentColor;">Last Value</div>
<div class="t" style="left:366.80px;top:574.97px;font-size:15.5px;font-weight:normal;color:#111a33;font-style:normal;-webkit-text-stroke:0.3px currentColor;">(volume)</div>
<svg class="a" style="left:434px;top:575.5px" width="11" height="14" viewBox="0 0 11 14"><path d="M0.6,5 L5.4,0.3 L10.2,5 Z M0.6,7.3 H10.2 L5.4,12.8 Z" fill="#d3d3d3"/></svg>
<div class="t" style="left:482.00px;top:556.57px;font-size:15.5px;font-weight:normal;color:#111a33;font-style:normal;-webkit-text-stroke:0.3px currentColor;">Last Value</div>
<div class="t" style="left:482.60px;top:574.97px;font-size:15.5px;font-weight:normal;color:#111a33;font-style:normal;-webkit-text-stroke:0.3px currentColor;">(speed)</div>
<svg class="a" style="left:542.5px;top:575.5px" width="11" height="14" viewBox="0 0 11 14"><path d="M0.6,5 L5.4,0.3 L10.2,5 Z M0.6,7.3 H10.2 L5.4,12.8 Z" fill="#d3d3d3"/></svg>
<div class="t" style="left:680.00px;top:556.77px;font-size:15.5px;font-weight:normal;color:#111a33;font-style:normal;-webkit-text-stroke:0.3px currentColor;letter-spacing:0.3px;">Minimum</div>
<svg class="a" style="left:751.5px;top:556.5px" width="11" height="14" viewBox="0 0 11 14"><path d="M0.6,5 L5.4,0.3 L10.2,5 Z M0.6,7.3 H10.2 L5.4,12.8 Z" fill="#d3d3d3"/></svg>
<div class="t" style="left:885.80px;top:556.77px;font-size:15.5px;font-weight:normal;color:#111a33;font-style:normal;-webkit-text-stroke:0.3px currentColor;letter-spacing:0.3px;">Maximum</div>
<svg class="a" style="left:961.5px;top:556.5px" width="11" height="14" viewBox="0 0 11 14"><path d="M0.6,5 L5.4,0.3 L10.2,5 Z M0.6,7.3 H10.2 L5.4,12.8 Z" fill="#d3d3d3"/></svg>
<div class="b" style="left:63px;top:598px;width:1079px;height:1px;background:#ebebeb"></div>
<div class="t" style="left:75.50px;top:616.42px;font-size:15px;font-weight:normal;color:#555;font-style:normal;">Discards In</div>
<div class="t" style="left:-261.10px;width:600px;text-align:right;top:616.42px;font-size:15px;font-weight:normal;color:#555;font-style:normal;letter-spacing:0.5px;">11</div>
<div class="t" style="left:-152.50px;width:600px;text-align:right;top:616.42px;font-size:15px;font-weight:normal;color:#555;font-style:normal;letter-spacing:0.5px;">0 #</div>
<div class="t" style="left:-45.00px;width:600px;text-align:right;top:616.42px;font-size:15px;font-weight:normal;color:#555;font-style:normal;letter-spacing:0.5px;">0 #/s</div>
<div class="t" style="left:164.50px;width:600px;text-align:right;top:616.42px;font-size:15px;font-weight:normal;color:#555;font-style:normal;letter-spacing:0.5px;">0 #/s</div>
<div class="t" style="left:374.80px;width:600px;text-align:right;top:616.42px;font-size:15px;font-weight:normal;color:#555;font-style:normal;letter-spacing:0.5px;">0 #/s</div>
<svg class="a" style="left:1055px;top:614px" width="14" height="16" viewBox="0 0 14 16"><g fill="#4a4a4a"><circle cx="10.50" cy="5.40" r="4.32"/><rect x="9.74" y="0.00" width="1.51" height="2.70" transform="rotate(0.0 10.50 5.40)"/><rect x="9.74" y="0.00" width="1.51" height="2.70" transform="rotate(30.0 10.50 5.40)"/><rect x="9.74" y="0.00" width="1.51" height="2.70" transform="rotate(60.0 10.50 5.40)"/><rect x="9.74" y="0.00" width="1.51" height="2.70" transform="rotate(90.0 10.50 5.40)"/><rect x="9.74" y="0.00" width="1.51" height="2.70" transform="rotate(120.0 10.50 5.40)"/><rect x="9.74" y="0.00" width="1.51" height="2.70" transform="rotate(150.0 10.50 5.40)"/><rect x="9.74" y="0.00" width="1.51" height="2.70" transform="rotate(180.0 10.50 5.40)"/><rect x="9.74" y="0.00" width="1.51" height="2.70" transform="rotate(210.0 10.50 5.40)"/><rect x="9.74" y="0.00" width="1.51" height="2.70" transform="rotate(240.0 10.50 5.40)"/><rect x="9.74" y="0.00" width="1.51" height="2.70" transform="rotate(270.0 10.50 5.40)"/><rect x="9.74" y="0.00" width="1.51" height="2.70" transform="rotate(300.0 10.50 5.40)"/><rect x="9.74" y="0.00" width="1.51" height="2.70" transform="rotate(330.0 10.50 5.40)"/></g><circle cx="10.50" cy="5.40" r="2.70" fill="#fff"/><g fill="#4a4a4a"><circle cx="3.50" cy="12.60" r="2.73"/><rect x="2.90" y="9.10" width="1.19" height="1.75" transform="rotate(0.0 3.50 12.60)"/><rect x="2.90" y="9.10" width="1.19" height="1.75" transform="rotate(45.0 3.50 12.60)"/><rect x="2.90" y="9.10" width="1.19" height="1.75" transform="rotate(90.0 3.50 12.60)"/><rect x="2.90" y="9.10" width="1.19" height="1.75" transform="rotate(135.0 3.50 12.60)"/><rect x="2.90" y="9.10" width="1.19" height="1.75" transform="rotate(180.0 3.50 12.60)"/><rect x="2.90" y="9.10" width="1.19" height="1.75" transform="rotate(225.0 3.50 12.60)"/><rect x="2.90" y="9.10" width="1.19" height="1.75" transform="rotate(270.0 3.50 12.60)"/><rect x="2.90" y="9.10" width="1.19" height="1.75" transform="rotate(315.0 3.50 12.60)"/></g><circle cx="3.50" cy="12.60" r="1.47" fill="#fff"/></svg>
<div class="b" style="left:63px;top:638px;width:1079px;height:1px;background:#ebebeb"></div>
<div class="t" style="left:75.50px;top:656.62px;font-size:15px;font-weight:normal;color:#555;font-style:normal;">Discards Out</div>
<div class="t" style="left:-261.10px;width:600px;text-align:right;top:656.62px;font-size:15px;font-weight:normal;color:#555;font-style:normal;letter-spacing:0.5px;">12</div>
<div class="t" style="left:-152.50px;width:600px;text-align:right;top:656.62px;font-size:15px;font-weight:normal;color:#555;font-style:normal;letter-spacing:0.5px;">0 #</div>
<div class="t" style="left:-45.00px;width:600px;text-align:right;top:656.62px;font-size:15px;font-weight:normal;color:#555;font-style:normal;letter-spacing:0.5px;">0 #/s</div>
<div class="t" style="left:164.50px;width:600px;text-align:right;top:656.62px;font-size:15px;font-weight:normal;color:#555;font-style:normal;letter-spacing:0.5px;">0 #/s</div>
<div class="t" style="left:374.80px;width:600px;text-align:right;top:656.62px;font-size:15px;font-weight:normal;color:#555;font-style:normal;letter-spacing:0.5px;">0 #/s</div>
<svg class="a" style="left:1055px;top:654px" width="14" height="16" viewBox="0 0 14 16"><g fill="#4a4a4a"><circle cx="10.50" cy="5.40" r="4.32"/><rect x="9.74" y="0.00" width="1.51" height="2.70" transform="rotate(0.0 10.50 5.40)"/><rect x="9.74" y="0.00" width="1.51" height="2.70" transform="rotate(30.0 10.50 5.40)"/><rect x="9.74" y="0.00" width="1.51" height="2.70" transform="rotate(60.0 10.50 5.40)"/><rect x="9.74" y="0.00" width="1.51" height="2.70" transform="rotate(90.0 10.50 5.40)"/><rect x="9.74" y="0.00" width="1.51" height="2.70" transform="rotate(120.0 10.50 5.40)"/><rect x="9.74" y="0.00" width="1.51" height="2.70" transform="rotate(150.0 10.50 5.40)"/><rect x="9.74" y="0.00" width="1.51" height="2.70" transform="rotate(180.0 10.50 5.40)"/><rect x="9.74" y="0.00" width="1.51" height="2.70" transform="rotate(210.0 10.50 5.40)"/><rect x="9.74" y="0.00" width="1.51" height="2.70" transform="rotate(240.0 10.50 5.40)"/><rect x="9.74" y="0.00" width="1.51" height="2.70" transform="rotate(270.0 10.50 5.40)"/><rect x="9.74" y="0.00" width="1.51" height="2.70" transform="rotate(300.0 10.50 5.40)"/><rect x="9.74" y="0.00" width="1.51" height="2.70" transform="rotate(330.0 10.50 5.40)"/></g><circle cx="10.50" cy="5.40" r="2.70" fill="#fff"/><g fill="#4a4a4a"><circle cx="3.50" cy="12.60" r="2.73"/><rect x="2.90" y="9.10" width="1.19" height="1.75" transform="rotate(0.0 3.50 12.60)"/><rect x="2.90" y="9.10" width="1.19" height="1.75" transform="rotate(45.0 3.50 12.60)"/><rect x="2.90" y="9.10" width="1.19" height="1.75" transform="rotate(90.0 3.50 12.60)"/><rect x="2.90" y="9.10" width="1.19" height="1.75" transform="rotate(135.0 3.50 12.60)"/><rect x="2.90" y="9.10" width="1.19" height="1.75" transform="rotate(180.0 3.50 12.60)"/><rect x="2.90" y="9.10" width="1.19" height="1.75" transform="rotate(225.0 3.50 12.60)"/><rect x="2.90" y="9.10" width="1.19" height="1.75" transform="rotate(270.0 3.50 12.60)"/><rect x="2.90" y="9.10" width="1.19" height="1.75" transform="rotate(315.0 3.50 12.60)"/></g><circle cx="3.50" cy="12.60" r="1.47" fill="#fff"/></svg>
<div class="b" style="left:63px;top:678px;width:1079px;height:1px;background:#ebebeb"></div>
<div class="t" style="left:75.50px;top:696.82px;font-size:15px;font-weight:normal;color:#555;font-style:normal;">Downtime</div>
<div class="t" style="left:-261.10px;width:600px;text-align:right;top:696.82px;font-size:15px;font-weight:normal;color:#555;font-style:normal;letter-spacing:0.5px;">-4</div>
<svg class="a" style="left:1055px;top:694px" width="14" height="16" viewBox="0 0 14 16"><g fill="#4a4a4a"><circle cx="10.50" cy="5.40" r="4.32"/><rect x="9.74" y="0.00" width="1.51" height="2.70" transform="rotate(0.0 10.50 5.40)"/><rect x="9.74" y="0.00" width="1.51" height="2.70" transform="rotate(30.0 10.50 5.40)"/><rect x="9.74" y="0.00" width="1.51" height="2.70" transform="rotate(60.0 10.50 5.40)"/><rect x="9.74" y="0.00" width="1.51" height="2.70" transform="rotate(90.0 10.50 5.40)"/><rect x="9.74" y="0.00" width="1.51" height="2.70" transform="rotate(120.0 10.50 5.40)"/><rect x="9.74" y="0.00" width="1.51" height="2.70" transform="rotate(150.0 10.50 5.40)"/><rect x="9.74" y="0.00" width="1.51" height="2.70" transform="rotate(180.0 10.50 5.40)"/><rect x="9.74" y="0.00" width="1.51" height="2.70" transform="rotate(210.0 10.50 5.40)"/><rect x="9.74" y="0.00" width="1.51" height="2.70" transform="rotate(240.0 10.50 5.40)"/><rect x="9.74" y="0.00" width="1.51" height="2.70" transform="rotate(270.0 10.50 5.40)"/><rect x="9.74" y="0.00" width="1.51" height="2.70" transform="rotate(300.0 10.50 5.40)"/><rect x="9.74" y="0.00" width="1.51" height="2.70" transform="rotate(330.0 10.50 5.40)"/></g><circle cx="10.50" cy="5.40" r="2.70" fill="#fff"/><g fill="#4a4a4a"><circle cx="3.50" cy="12.60" r="2.73"/><rect x="2.90" y="9.10" width="1.19" height="1.75" transform="rotate(0.0 3.50 12.60)"/><rect x="2.90" y="9.10" width="1.19" height="1.75" transform="rotate(45.0 3.50 12.60)"/><rect x="2.90" y="9.10" width="1.19" height="1.75" transform="rotate(90.0 3.50 12.60)"/><rect x="2.90" y="9.10" width="1.19" height="1.75" transform="rotate(135.0 3.50 12.60)"/><rect x="2.90" y="9.10" width="1.19" height="1.75" transform="rotate(180.0 3.50 12.60)"/><rect x="2.90" y="9.10" width="1.19" height="1.75" transform="rotate(225.0 3.50 12.60)"/><rect x="2.90" y="9.10" width="1.19" height="1.75" transform="rotate(270.0 3.50 12.60)"/><rect x="2.90" y="9.10" width="1.19" height="1.75" transform="rotate(315.0 3.50 12.60)"/></g><circle cx="3.50" cy="12.60" r="1.47" fill="#fff"/></svg>
<div class="b" style="left:63px;top:719px;width:1079px;height:1px;background:#ebebeb"></div>
<div class="t" style="left:75.50px;top:737.02px;font-size:15px;font-weight:normal;color:#555;font-style:normal;">Errors In</div>
<div class="t" style="left:-261.10px;width:600px;text-align:right;top:737.02px;font-size:15px;font-weight:normal;color:#555;font-style:normal;letter-spacing:0.5px;">9</div>
<div class="t" style="left:-152.50px;width:600px;text-align:right;top:737.02px;font-size:15px;font-weight:normal;color:#555;font-style:normal;letter-spacing:0.5px;">0 #</div>
<div class="t" style="left:-45.00px;width:600px;text-align:right;top:737.02px;font-size:15px;font-weight:normal;color:#555;font-style:normal;letter-spacing:0.5px;">0 #/s</div>
<div class="t" style="left:164.50px;width:600px;text-align:right;top:737.02px;font-size:15px;font-weight:normal;color:#555;font-style:normal;letter-spacing:0.5px;">0 #/s</div>
<div class="t" style="left:374.80px;width:600px;text-align:right;top:737.02px;font-size:15px;font-weight:normal;color:#555;font-style:normal;letter-spacing:0.5px;">0 #/s</div>
<svg class="a" style="left:1055px;top:734px" width="14" height="16" viewBox="0 0 14 16"><g fill="#4a4a4a"><circle cx="10.50" cy="5.40" r="4.32"/><rect x="9.74" y="0.00" width="1.51" height="2.70" transform="rotate(0.0 10.50 5.40)"/><rect x="9.74" y="0.00" width="1.51" height="2.70" transform="rotate(30.0 10.50 5.40)"/><rect x="9.74" y="0.00" width="1.51" height="2.70" transform="rotate(60.0 10.50 5.40)"/><rect x="9.74" y="0.00" width="1.51" height="2.70" transform="rotate(90.0 10.50 5.40)"/><rect x="9.74" y="0.00" width="1.51" height="2.70" transform="rotate(120.0 10.50 5.40)"/><rect x="9.74" y="0.00" width="1.51" height="2.70" transform="rotate(150.0 10.50 5.40)"/><rect x="9.74" y="0.00" width="1.51" height="2.70" transform="rotate(180.0 10.50 5.40)"/><rect x="9.74" y="0.00" width="1.51" height="2.70" transform="rotate(210.0 10.50 5.40)"/><rect x="9.74" y="0.00" width="1.51" height="2.70" transform="rotate(240.0 10.50 5.40)"/><rect x="9.74" y="0.00" width="1.51" height="2.70" transform="rotate(270.0 10.50 5.40)"/><rect x="9.74" y="0.00" width="1.51" height="2.70" transform="rotate(300.0 10.50 5.40)"/><rect x="9.74" y="0.00" width="1.51" height="2.70" transform="rotate(330.0 10.50 5.40)"/></g><circle cx="10.50" cy="5.40" r="2.70" fill="#fff"/><g fill="#4a4a4a"><circle cx="3.50" cy="12.60" r="2.73"/><rect x="2.90" y="9.10" width="1.19" height="1.75" transform="rotate(0.0 3.50 12.60)"/><rect x="2.90" y="9.10" width="1.19" height="1.75" transform="rotate(45.0 3.50 12.60)"/><rect x="2.90" y="9.10" width="1.19" height="1.75" transform="rotate(90.0 3.50 12.60)"/><rect x="2.90" y="9.10" width="1.19" height="1.75" transform="rotate(135.0 3.50 12.60)"/><rect x="2.90" y="9.10" width="1.19" height="1.75" transform="rotate(180.0 3.50 12.60)"/><rect x="2.90" y="9.10" width="1.19" height="1.75" transform="rotate(225.0 3.50 12.60)"/><rect x="2.90" y="9.10" width="1.19" height="1.75" transform="rotate(270.0 3.50 12.60)"/><rect x="2.90" y="9.10" width="1.19" height="1.75" transform="rotate(315.0 3.50 12.60)"/></g><circle cx="3.50" cy="12.60" r="1.47" fill="#fff"/></svg>
<div class="b" style="left:63px;top:759px;width:1079px;height:1px;background:#ebebeb"></div>
<div class="t" style="left:75.50px;top:777.22px;font-size:15px;font-weight:normal;color:#555;font-style:normal;">Errors Out</div>
<div class="t" style="left:-261.10px;width:600px;text-align:right;top:777.22px;font-size:15px;font-weight:normal;color:#555;font-style:normal;letter-spacing:0.5px;">10</div>
<div class="t" style="left:-152.50px;width:600px;text-align:right;top:777.22px;font-size:15px;font-weight:normal;color:#555;font-style:normal;letter-spacing:0.5px;">0 #</div>
<div class="t" style="left:-45.00px;width:600px;text-align:right;top:777.22px;font-size:15px;font-weight:normal;color:#555;font-style:normal;letter-spacing:0.5px;">0 #/s</div>
<div class="t" style="left:164.50px;width:600px;text-align:right;top:777.22px;font-size:15px;font-weight:normal;color:#555;font-style:normal;letter-spacing:0.5px;">0 #/s</div>
<div class="t" style="left:374.80px;width:600px;text-align:right;top:777.22px;font-size:15px;font-weight:normal;color:#555;font-style:normal;letter-spacing:0.5px;">0 #/s</div>
<svg class="a" style="left:1055px;top:774px" width="14" height="16" viewBox="0 0 14 16"><g fill="#4a4a4a"><circle cx="10.50" cy="5.40" r="4.32"/><rect x="9.74" y="0.00" width="1.51" height="2.70" transform="rotate(0.0 10.50 5.40)"/><rect x="9.74" y="0.00" width="1.51" height="2.70" transform="rotate(30.0 10.50 5.40)"/><rect x="9.74" y="0.00" width="1.51" height="2.70" transform="rotate(60.0 10.50 5.40)"/><rect x="9.74" y="0.00" width="1.51" height="2.70" transform="rotate(90.0 10.50 5.40)"/><rect x="9.74" y="0.00" width="1.51" height="2.70" transform="rotate(120.0 10.50 5.40)"/><rect x="9.74" y="0.00" width="1.51" height="2.70" transform="rotate(150.0 10.50 5.40)"/><rect x="9.74" y="0.00" width="1.51" height="2.70" transform="rotate(180.0 10.50 5.40)"/><rect x="9.74" y="0.00" width="1.51" height="2.70" transform="rotate(210.0 10.50 5.40)"/><rect x="9.74" y="0.00" width="1.51" height="2.70" transform="rotate(240.0 10.50 5.40)"/><rect x="9.74" y="0.00" width="1.51" height="2.70" transform="rotate(270.0 10.50 5.40)"/><rect x="9.74" y="0.00" width="1.51" height="2.70" transform="rotate(300.0 10.50 5.40)"/><rect x="9.74" y="0.00" width="1.51" height="2.70" transform="rotate(330.0 10.50 5.40)"/></g><circle cx="10.50" cy="5.40" r="2.70" fill="#fff"/><g fill="#4a4a4a"><circle cx="3.50" cy="12.60" r="2.73"/><rect x="2.90" y="9.10" width="1.19" height="1.75" transform="rotate(0.0 3.50 12.60)"/><rect x="2.90" y="9.10" width="1.19" height="1.75" transform="rotate(45.0 3.50 12.60)"/><rect x="2.90" y="9.10" width="1.19" height="1.75" transform="rotate(90.0 3.50 12.60)"/><rect x="2.90" y="9.10" width="1.19" height="1.75" transform="rotate(135.0 3.50 12.60)"/><rect x="2.90" y="9.10" width="1.19" height="1.75" transform="rotate(180.0 3.50 12.60)"/><rect x="2.90" y="9.10" width="1.19" height="1.75" transform="rotate(225.0 3.50 12.60)"/><rect x="2.90" y="9.10" width="1.19" height="1.75" transform="rotate(270.0 3.50 12.60)"/><rect x="2.90" y="9.10" width="1.19" height="1.75" transform="rotate(315.0 3.50 12.60)"/></g><circle cx="3.50" cy="12.60" r="1.47" fill="#fff"/></svg>
<div class="b" style="left:63px;top:799px;width:1079px;height:1px;background:#ebebeb"></div>
<div class="t" style="left:75.50px;top:817.42px;font-size:15px;font-weight:normal;color:#555;font-style:normal;">Non-Unicast In</div>
<div class="t" style="left:-261.10px;width:600px;text-align:right;top:817.42px;font-size:15px;font-weight:normal;color:#555;font-style:normal;letter-spacing:0.5px;">7</div>
<div class="t" style="left:-152.50px;width:600px;text-align:right;top:817.42px;font-size:15px;font-weight:normal;color:#555;font-style:normal;letter-spacing:0.5px;">83 #</div>
<div class="t" style="left:-45.00px;width:600px;text-align:right;top:817.42px;font-size:15px;font-weight:normal;color:#555;font-style:normal;letter-spacing:0.5px;">1,38 #/s</div>
<div class="t" style="left:164.50px;width:600px;text-align:right;top:817.42px;font-size:15px;font-weight:normal;color:#555;font-style:normal;letter-spacing:0.5px;">0 #/s</div>
<div class="t" style="left:374.80px;width:600px;text-align:right;top:817.42px;font-size:15px;font-weight:normal;color:#555;font-style:normal;letter-spacing:0.5px;">2,50 #/s</div>
<svg class="a" style="left:1055px;top:815px" width="14" height="16" viewBox="0 0 14 16"><g fill="#4a4a4a"><circle cx="10.50" cy="5.40" r="4.32"/><rect x="9.74" y="0.00" width="1.51" height="2.70" transform="rotate(0.0 10.50 5.40)"/><rect x="9.74" y="0.00" width="1.51" height="2.70" transform="rotate(30.0 10.50 5.40)"/><rect x="9.74" y="0.00" width="1.51" height="2.70" transform="rotate(60.0 10.50 5.40)"/><rect x="9.74" y="0.00" width="1.51" height="2.70" transform="rotate(90.0 10.50 5.40)"/><rect x="9.74" y="0.00" width="1.51" height="2.70" transform="rotate(120.0 10.50 5.40)"/><rect x="9.74" y="0.00" width="1.51" height="2.70" transform="rotate(150.0 10.50 5.40)"/><rect x="9.74" y="0.00" width="1.51" height="2.70" transform="rotate(180.0 10.50 5.40)"/><rect x="9.74" y="0.00" width="1.51" height="2.70" transform="rotate(210.0 10.50 5.40)"/><rect x="9.74" y="0.00" width="1.51" height="2.70" transform="rotate(240.0 10.50 5.40)"/><rect x="9.74" y="0.00" width="1.51" height="2.70" transform="rotate(270.0 10.50 5.40)"/><rect x="9.74" y="0.00" width="1.51" height="2.70" transform="rotate(300.0 10.50 5.40)"/><rect x="9.74" y="0.00" width="1.51" height="2.70" transform="rotate(330.0 10.50 5.40)"/></g><circle cx="10.50" cy="5.40" r="2.70" fill="#fff"/><g fill="#4a4a4a"><circle cx="3.50" cy="12.60" r="2.73"/><rect x="2.90" y="9.10" width="1.19" height="1.75" transform="rotate(0.0 3.50 12.60)"/><rect x="2.90" y="9.10" width="1.19" height="1.75" transform="rotate(45.0 3.50 12.60)"/><rect x="2.90" y="9.10" width="1.19" height="1.75" transform="rotate(90.0 3.50 12.60)"/><rect x="2.90" y="9.10" width="1.19" height="1.75" transform="rotate(135.0 3.50 12.60)"/><rect x="2.90" y="9.10" width="1.19" height="1.75" transform="rotate(180.0 3.50 12.60)"/><rect x="2.90" y="9.10" width="1.19" height="1.75" transform="rotate(225.0 3.50 12.60)"/><rect x="2.90" y="9.10" width="1.19" height="1.75" transform="rotate(270.0 3.50 12.60)"/><rect x="2.90" y="9.10" width="1.19" height="1.75" transform="rotate(315.0 3.50 12.60)"/></g><circle cx="3.50" cy="12.60" r="1.47" fill="#fff"/></svg>
<div class="b" style="left:63px;top:839px;width:1079px;height:1px;background:#ebebeb"></div>
<div class="t" style="left:75.50px;top:857.62px;font-size:15px;font-weight:normal;color:#555;font-style:normal;">Non-Unicast Out</div>
<div class="t" style="left:-261.10px;width:600px;text-align:right;top:857.62px;font-size:15px;font-weight:normal;color:#555;font-style:normal;letter-spacing:0.5px;">8</div>
<div class="t" style="left:-152.50px;width:600px;text-align:right;top:857.62px;font-size:15px;font-weight:normal;color:#555;font-style:normal;letter-spacing:0.5px;">41 #</div>
<div class="t" style="left:-45.00px;width:600px;text-align:right;top:857.62px;font-size:15px;font-weight:normal;color:#555;font-style:normal;letter-spacing:0.5px;">0,68 #/s</div>
<div class="t" style="left:164.50px;width:600px;text-align:right;top:857.62px;font-size:15px;font-weight:normal;color:#555;font-style:normal;letter-spacing:0.5px;">0,42 #/s</div>
<div class="t" style="left:374.80px;width:600px;text-align:right;top:857.62px;font-size:15px;font-weight:normal;color:#555;font-style:normal;letter-spacing:0.5px;">21 #/s</div>
<svg class="a" style="left:1055px;top:855px" width="14" height="16" viewBox="0 0 14 16"><g fill="#4a4a4a"><circle cx="10.50" cy="5.40" r="4.32"/><rect x="9.74" y="0.00" width="1.51" height="2.70" transform="rotate(0.0 10.50 5.40)"/><rect x="9.74" y="0.00" width="1.51" height="2.70" transform="rotate(30.0 10.50 5.40)"/><rect x="9.74" y="0.00" width="1.51" height="2.70" transform="rotate(60.0 10.50 5.40)"/><rect x="9.74" y="0.00" width="1.51" height="2.70" transform="rotate(90.0 10.50 5.40)"/><rect x="9.74" y="0.00" width="1.51" height="2.70" transform="rotate(120.0 10.50 5.40)"/><rect x="9.74" y="0.00" width="1.51" height="2.70" transform="rotate(150.0 10.50 5.40)"/><rect x="9.74" y="0.00" width="1.51" height="2.70" transform="rotate(180.0 10.50 5.40)"/><rect x="9.74" y="0.00" width="1.51" height="2.70" transform="rotate(210.0 10.50 5.40)"/><rect x="9.74" y="0.00" width="1.51" height="2.70" transform="rotate(240.0 10.50 5.40)"/><rect x="9.74" y="0.00" width="1.51" height="2.70" transform="rotate(270.0 10.50 5.40)"/><rect x="9.74" y="0.00" width="1.51" height="2.70" transform="rotate(300.0 10.50 5.40)"/><rect x="9.74" y="0.00" width="1.51" height="2.70" transform="rotate(330.0 10.50 5.40)"/></g><circle cx="10.50" cy="5.40" r="2.70" fill="#fff"/><g fill="#4a4a4a"><circle cx="3.50" cy="12.60" r="2.73"/><rect x="2.90" y="9.10" width="1.19" height="1.75" transform="rotate(0.0 3.50 12.60)"/><rect x="2.90" y="9.10" width="1.19" height="1.75" transform="rotate(45.0 3.50 12.60)"/><rect x="2.90" y="9.10" width="1.19" height="1.75" transform="rotate(90.0 3.50 12.60)"/><rect x="2.90" y="9.10" width="1.19" height="1.75" transform="rotate(135.0 3.50 12.60)"/><rect x="2.90" y="9.10" width="1.19" height="1.75" transform="rotate(180.0 3.50 12.60)"/><rect x="2.90" y="9.10" width="1.19" height="1.75" transform="rotate(225.0 3.50 12.60)"/><rect x="2.90" y="9.10" width="1.19" height="1.75" transform="rotate(270.0 3.50 12.60)"/><rect x="2.90" y="9.10" width="1.19" height="1.75" transform="rotate(315.0 3.50 12.60)"/></g><circle cx="3.50" cy="12.60" r="1.47" fill="#fff"/></svg>
<div class="b" style="left:63px;top:879px;width:1079px;height:1px;background:#ebebeb"></div>
<div class="t" style="left:75.50px;top:897.83px;font-size:15px;font-weight:normal;color:#555;font-style:normal;">Packets</div>
<div class="t" style="left:-261.10px;width:600px;text-align:right;top:897.83px;font-size:15px;font-weight:normal;color:#555;font-style:normal;letter-spacing:0.5px;">2</div>
<div class="t" style="left:-152.50px;width:600px;text-align:right;top:897.83px;font-size:15px;font-weight:normal;color:#555;font-style:normal;letter-spacing:0.5px;">972 #</div>
<div class="t" style="left:-45.00px;width:600px;text-align:right;top:897.83px;font-size:15px;font-weight:normal;color:#555;font-style:normal;letter-spacing:0.5px;">16 #/s</div>
<div class="t" style="left:164.50px;width:600px;text-align:right;top:897.83px;font-size:15px;font-weight:normal;color:#555;font-style:normal;letter-spacing:0.5px;">14 #/s</div>
<div class="t" style="left:374.80px;width:600px;text-align:right;top:897.83px;font-size:15px;font-weight:normal;color:#555;font-style:normal;letter-spacing:0.5px;">30 #/s</div>
<svg class="a" style="left:1055px;top:895px" width="14" height="16" viewBox="0 0 14 16"><g fill="#4a4a4a"><circle cx="10.50" cy="5.40" r="4.32"/><rect x="9.74" y="0.00" width="1.51" height="2.70" transform="rotate(0.0 10.50 5.40)"/><rect x="9.74" y="0.00" width="1.51" height="2.70" transform="rotate(30.0 10.50 5.40)"/><rect x="9.74" y="0.00" width="1.51" height="2.70" transform="rotate(60.0 10.50 5.40)"/><rect x="9.74" y="0.00" width="1.51" height="2.70" transform="rotate(90.0 10.50 5.40)"/><rect x="9.74" y="0.00" width="1.51" height="2.70" transform="rotate(120.0 10.50 5.40)"/><rect x="9.74" y="0.00" width="1.51" height="2.70" transform="rotate(150.0 10.50 5.40)"/><rect x="9.74" y="0.00" width="1.51" height="2.70" transform="rotate(180.0 10.50 5.40)"/><rect x="9.74" y="0.00" width="1.51" height="2.70" transform="rotate(210.0 10.50 5.40)"/><rect x="9.74" y="0.00" width="1.51" height="2.70" transform="rotate(240.0 10.50 5.40)"/><rect x="9.74" y="0.00" width="1.51" height="2.70" transform="rotate(270.0 10.50 5.40)"/><rect x="9.74" y="0.00" width="1.51" height="2.70" transform="rotate(300.0 10.50 5.40)"/><rect x="9.74" y="0.00" width="1.51" height="2.70" transform="rotate(330.0 10.50 5.40)"/></g><circle cx="10.50" cy="5.40" r="2.70" fill="#fff"/><g fill="#4a4a4a"><circle cx="3.50" cy="12.60" r="2.73"/><rect x="2.90" y="9.10" width="1.19" height="1.75" transform="rotate(0.0 3.50 12.60)"/><rect x="2.90" y="9.10" width="1.19" height="1.75" transform="rotate(45.0 3.50 12.60)"/><rect x="2.90" y="9.10" width="1.19" height="1.75" transform="rotate(90.0 3.50 12.60)"/><rect x="2.90" y="9.10" width="1.19" height="1.75" transform="rotate(135.0 3.50 12.60)"/><rect x="2.90" y="9.10" width="1.19" height="1.75" transform="rotate(180.0 3.50 12.60)"/><rect x="2.90" y="9.10" width="1.19" height="1.75" transform="rotate(225.0 3.50 12.60)"/><rect x="2.90" y="9.10" width="1.19" height="1.75" transform="rotate(270.0 3.50 12.60)"/><rect x="2.90" y="9.10" width="1.19" height="1.75" transform="rotate(315.0 3.50 12.60)"/></g><circle cx="3.50" cy="12.60" r="1.47" fill="#fff"/></svg>
<div class="b" style="left:63px;top:920px;width:1079px;height:1px;background:#ebebeb"></div>
<div class="t" style="left:75.50px;top:938.02px;font-size:15px;font-weight:normal;color:#555;font-style:normal;">Packets Received</div>
<div class="t" style="left:-261.10px;width:600px;text-align:right;top:938.02px;font-size:15px;font-weight:normal;color:#555;font-style:normal;letter-spacing:0.5px;">3</div>
<div class="t" style="left:-152.50px;width:600px;text-align:right;top:938.02px;font-size:15px;font-weight:normal;color:#555;font-style:normal;letter-spacing:0.5px;">553 #</div>
<div class="t" style="left:-45.00px;width:600px;text-align:right;top:938.02px;font-size:15px;font-weight:normal;color:#555;font-style:normal;letter-spacing:0.5px;">9,22 #/s</div>
<div class="t" style="left:164.50px;width:600px;text-align:right;top:938.02px;font-size:15px;font-weight:normal;color:#555;font-style:normal;letter-spacing:0.5px;">6,50 #/s</div>
<div class="t" style="left:374.80px;width:600px;text-align:right;top:938.02px;font-size:15px;font-weight:normal;color:#555;font-style:normal;letter-spacing:0.5px;">26 #/s</div>
<svg class="a" style="left:1055px;top:935px" width="14" height="16" viewBox="0 0 14 16"><g fill="#4a4a4a"><circle cx="10.50" cy="5.40" r="4.32"/><rect x="9.74" y="0.00" width="1.51" height="2.70" transform="rotate(0.0 10.50 5.40)"/><rect x="9.74" y="0.00" width="1.51" height="2.70" transform="rotate(30.0 10.50 5.40)"/><rect x="9.74" y="0.00" width="1.51" height="2.70" transform="rotate(60.0 10.50 5.40)"/><rect x="9.74" y="0.00" width="1.51" height="2.70" transform="rotate(90.0 10.50 5.40)"/><rect x="9.74" y="0.00" width="1.51" height="2.70" transform="rotate(120.0 10.50 5.40)"/><rect x="9.74" y="0.00" width="1.51" height="2.70" transform="rotate(150.0 10.50 5.40)"/><rect x="9.74" y="0.00" width="1.51" height="2.70" transform="rotate(180.0 10.50 5.40)"/><rect x="9.74" y="0.00" width="1.51" height="2.70" transform="rotate(210.0 10.50 5.40)"/><rect x="9.74" y="0.00" width="1.51" height="2.70" transform="rotate(240.0 10.50 5.40)"/><rect x="9.74" y="0.00" width="1.51" height="2.70" transform="rotate(270.0 10.50 5.40)"/><rect x="9.74" y="0.00" width="1.51" height="2.70" transform="rotate(300.0 10.50 5.40)"/><rect x="9.74" y="0.00" width="1.51" height="2.70" transform="rotate(330.0 10.50 5.40)"/></g><circle cx="10.50" cy="5.40" r="2.70" fill="#fff"/><g fill="#4a4a4a"><circle cx="3.50" cy="12.60" r="2.73"/><rect x="2.90" y="9.10" width="1.19" height="1.75" transform="rotate(0.0 3.50 12.60)"/><rect x="2.90" y="9.10" width="1.19" height="1.75" transform="rotate(45.0 3.50 12.60)"/><rect x="2.90" y="9.10" width="1.19" height="1.75" transform="rotate(90.0 3.50 12.60)"/><rect x="2.90" y="9.10" width="1.19" height="1.75" transform="rotate(135.0 3.50 12.60)"/><rect x="2.90" y="9.10" width="1.19" height="1.75" transform="rotate(180.0 3.50 12.60)"/><rect x="2.90" y="9.10" width="1.19" height="1.75" transform="rotate(225.0 3.50 12.60)"/><rect x="2.90" y="9.10" width="1.19" height="1.75" transform="rotate(270.0 3.50 12.60)"/><rect x="2.90" y="9.10" width="1.19" height="1.75" transform="rotate(315.0 3.50 12.60)"/></g><circle cx="3.50" cy="12.60" r="1.47" fill="#fff"/></svg>
<div class="b" style="left:63px;top:960px;width:1079px;height:1px;background:#ebebeb"></div>
<div class="t" style="left:75.50px;top:978.22px;font-size:15px;font-weight:normal;color:#555;font-style:normal;">Packets Sent</div>
<div class="t" style="left:-261.10px;width:600px;text-align:right;top:978.22px;font-size:15px;font-weight:normal;color:#555;font-style:normal;letter-spacing:0.5px;">4</div>
<div class="t" style="left:-152.50px;width:600px;text-align:right;top:978.22px;font-size:15px;font-weight:normal;color:#555;font-style:normal;letter-spacing:0.5px;">419 #</div>
<div class="t" style="left:-45.00px;width:600px;text-align:right;top:978.22px;font-size:15px;font-weight:normal;color:#555;font-style:normal;letter-spacing:0.5px;">6,98 #/s</div>
<div class="t" style="left:164.50px;width:600px;text-align:right;top:978.22px;font-size:15px;font-weight:normal;color:#555;font-style:normal;letter-spacing:0.5px;">0 #/s</div>
<div class="t" style="left:374.80px;width:600px;text-align:right;top:978.22px;font-size:15px;font-weight:normal;color:#555;font-style:normal;letter-spacing:0.5px;">10 #/s</div>
<svg class="a" style="left:1055px;top:975px" width="14" height="16" viewBox="0 0 14 16"><g fill="#4a4a4a"><circle cx="10.50" cy="5.40" r="4.32"/><rect x="9.74" y="0.00" width="1.51" height="2.70" transform="rotate(0.0 10.50 5.40)"/><rect x="9.74" y="0.00" width="1.51" height="2.70" transform="rotate(30.0 10.50 5.40)"/><rect x="9.74" y="0.00" width="1.51" height="2.70" transform="rotate(60.0 10.50 5.40)"/><rect x="9.74" y="0.00" width="1.51" height="2.70" transform="rotate(90.0 10.50 5.40)"/><rect x="9.74" y="0.00" width="1.51" height="2.70" transform="rotate(120.0 10.50 5.40)"/><rect x="9.74" y="0.00" width="1.51" height="2.70" transform="rotate(150.0 10.50 5.40)"/><rect x="9.74" y="0.00" width="1.51" height="2.70" transform="rotate(180.0 10.50 5.40)"/><rect x="9.74" y="0.00" width="1.51" height="2.70" transform="rotate(210.0 10.50 5.40)"/><rect x="9.74" y="0.00" width="1.51" height="2.70" transform="rotate(240.0 10.50 5.40)"/><rect x="9.74" y="0.00" width="1.51" height="2.70" transform="rotate(270.0 10.50 5.40)"/><rect x="9.74" y="0.00" width="1.51" height="2.70" transform="rotate(300.0 10.50 5.40)"/><rect x="9.74" y="0.00" width="1.51" height="2.70" transform="rotate(330.0 10.50 5.40)"/></g><circle cx="10.50" cy="5.40" r="2.70" fill="#fff"/><g fill="#4a4a4a"><circle cx="3.50" cy="12.60" r="2.73"/><rect x="2.90" y="9.10" width="1.19" height="1.75" transform="rotate(0.0 3.50 12.60)"/><rect x="2.90" y="9.10" width="1.19" height="1.75" transform="rotate(45.0 3.50 12.60)"/><rect x="2.90" y="9.10" width="1.19" height="1.75" transform="rotate(90.0 3.50 12.60)"/><rect x="2.90" y="9.10" width="1.19" height="1.75" transform="rotate(135.0 3.50 12.60)"/><rect x="2.90" y="9.10" width="1.19" height="1.75" transform="rotate(180.0 3.50 12.60)"/><rect x="2.90" y="9.10" width="1.19" height="1.75" transform="rotate(225.0 3.50 12.60)"/><rect x="2.90" y="9.10" width="1.19" height="1.75" transform="rotate(270.0 3.50 12.60)"/><rect x="2.90" y="9.10" width="1.19" height="1.75" transform="rotate(315.0 3.50 12.60)"/></g><circle cx="3.50" cy="12.60" r="1.47" fill="#fff"/></svg>
<div class="b" style="left:63px;top:1000px;width:1079px;height:1px;background:#ebebeb"></div>
</body></html>
